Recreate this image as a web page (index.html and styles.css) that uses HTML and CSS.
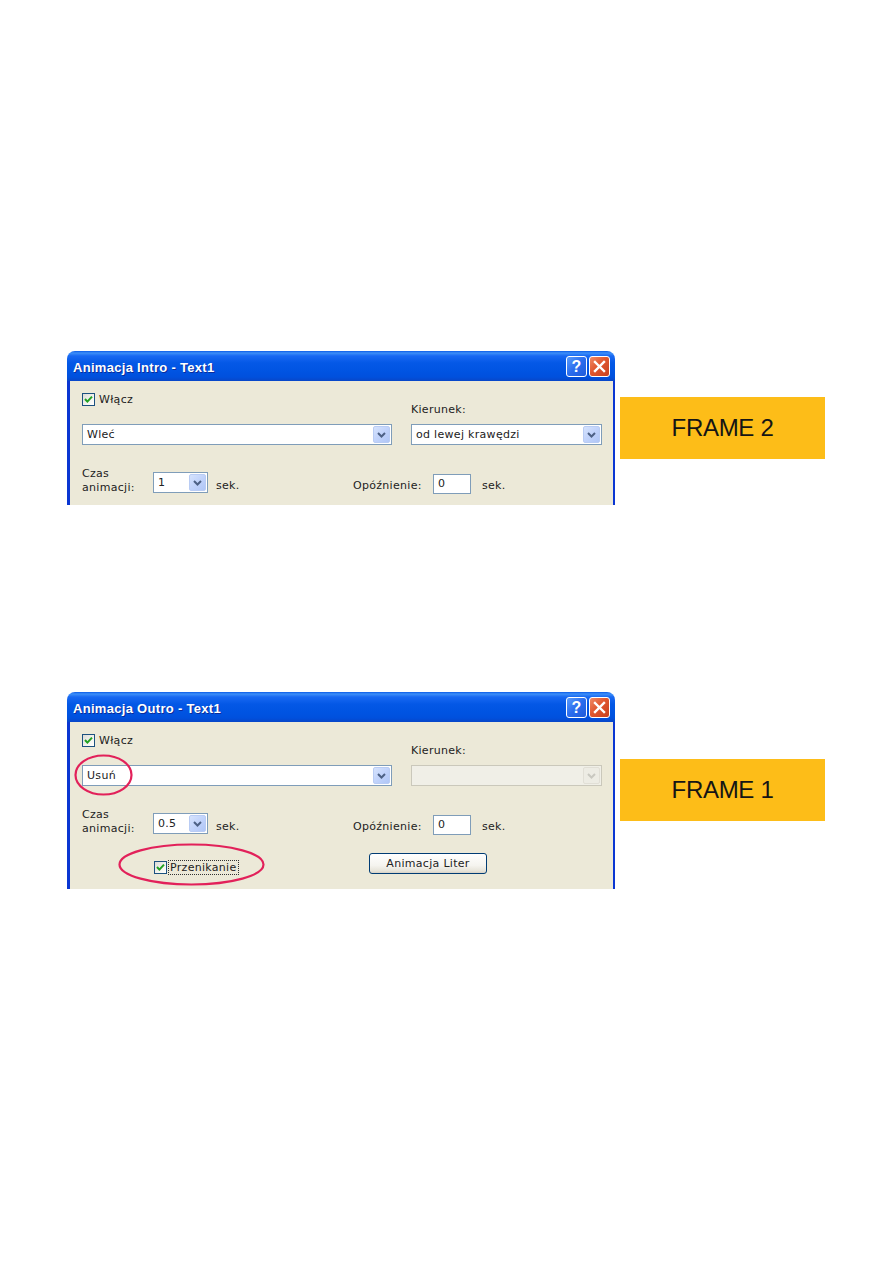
FILE: index.html
```html
<!DOCTYPE html>
<html lang="pl">
<head>
<meta charset="utf-8">
<title>Animacja</title>
<link rel="stylesheet" href="styles.css">
</head>
<body>
<main class="page">
  <section class="row">
    <div class="dialog">
      <div class="titlebar">
        <span class="title">Animacja Intro - Text1</span>
        <div class="tbtns">
          <span class="tbtn help">?</span>
          <span class="tbtn close"><svg width="13" height="13" viewBox="0 0 13 13"><path d="M2 2 L11 11 M11 2 L2 11" stroke="#fff" stroke-width="2.4" stroke-linecap="square"/></svg></span>
        </div>
      </div>
      <div class="dbody b1">
        <div class="r1">
          <div class="colL">
            <div class="chk"><span class="box"><svg width="11" height="11" viewBox="0 0 11 11"><path d="M2 5 L4.4 7.6 L9 2.6" fill="none" stroke="#21A121" stroke-width="2"/></svg></span><span>Włącz</span></div>
            <div class="combo wide"><span class="val">Wleć</span><span class="arrow"><svg width="9" height="6" viewBox="0 0 9 6"><path d="M1 1 L4.5 4.5 L8 1" fill="none" stroke="#4D6185" stroke-width="2"/></svg></span></div>
          </div>
          <div class="colR">
            <div class="lbl">Kierunek:</div>
            <div class="combo mid"><span class="val">od lewej krawędzi</span><span class="arrow"><svg width="9" height="6" viewBox="0 0 9 6"><path d="M1 1 L4.5 4.5 L8 1" fill="none" stroke="#4D6185" stroke-width="2"/></svg></span></div>
          </div>
        </div>
        <div class="r2">
          <div class="lbl2">Czas<br>animacji:</div>
          <div class="combo small"><span class="val">1</span><span class="arrow"><svg width="9" height="6" viewBox="0 0 9 6"><path d="M1 1 L4.5 4.5 L8 1" fill="none" stroke="#4D6185" stroke-width="2"/></svg></span></div>
          <span class="sek1">sek.</span>
          <span class="opo">Opóźnienie:</span>
          <div class="input">0</div>
          <span class="sek2">sek.</span>
        </div>
      </div>
    </div>
    <div class="frame f2">FRAME 2</div>
  </section>

  <section class="row">
    <div class="dialog">
      <div class="titlebar">
        <span class="title">Animacja Outro - Text1</span>
        <div class="tbtns">
          <span class="tbtn help">?</span>
          <span class="tbtn close"><svg width="13" height="13" viewBox="0 0 13 13"><path d="M2 2 L11 11 M11 2 L2 11" stroke="#fff" stroke-width="2.4" stroke-linecap="square"/></svg></span>
        </div>
      </div>
      <div class="dbody b2">
        <div class="r1">
          <div class="colL">
            <div class="chk"><span class="box"><svg width="11" height="11" viewBox="0 0 11 11"><path d="M2 5 L4.4 7.6 L9 2.6" fill="none" stroke="#21A121" stroke-width="2"/></svg></span><span>Włącz</span></div>
            <div class="combo wide"><span class="val">Usuń</span><span class="arrow"><svg width="9" height="6" viewBox="0 0 9 6"><path d="M1 1 L4.5 4.5 L8 1" fill="none" stroke="#4D6185" stroke-width="2"/></svg></span></div>
          </div>
          <div class="colR">
            <div class="lbl">Kierunek:</div>
            <div class="combo mid disabled"><span class="val"></span><span class="arrow"><svg width="9" height="6" viewBox="0 0 9 6"><path d="M1 1 L4.5 4.5 L8 1" fill="none" stroke="#C9C8C0" stroke-width="2"/></svg></span></div>
          </div>
        </div>
        <div class="r2">
          <div class="lbl2">Czas<br>animacji:</div>
          <div class="combo small"><span class="val">0.5</span><span class="arrow"><svg width="9" height="6" viewBox="0 0 9 6"><path d="M1 1 L4.5 4.5 L8 1" fill="none" stroke="#4D6185" stroke-width="2"/></svg></span></div>
          <span class="sek1">sek.</span>
          <span class="opo">Opóźnienie:</span>
          <div class="input">0</div>
          <span class="sek2">sek.</span>
        </div>
        <div class="r3">
          <div class="chk chk2"><span class="box"><svg width="11" height="11" viewBox="0 0 11 11"><path d="M2 5 L4.4 7.6 L9 2.6" fill="none" stroke="#21A121" stroke-width="2"/></svg></span><span class="focus">Przenikanie</span></div>
          <span class="btn">Animacja Liter</span>
        </div>
      </div>
      <svg class="marks" width="548" height="197" viewBox="0 0 548 197">
        <ellipse cx="36.5" cy="83" rx="28" ry="19.5" fill="none" stroke="#E2215A" stroke-width="2.2"/>
        <ellipse cx="124.5" cy="172.5" rx="72" ry="20" fill="none" stroke="#E2215A" stroke-width="2.2"/>
      </svg>
    </div>
    <div class="frame f1">FRAME 1</div>
  </section>
</main>
</body>
</html>
```

FILE: styles.css
```css
* { box-sizing: border-box; }

body {
  margin: 0;
  background: #fff;
  font-family: "DejaVu Sans", Verdana, sans-serif;
}

.page {
  padding: 351px 0 0 67px;
  display: flex;
  flex-direction: column;
  gap: 187px;
}

.row {
  display: flex;
  align-items: flex-start;
}

.dialog {
  width: 548px;
  flex-shrink: 0;
  position: relative;
}

.titlebar {
  height: 30px;
  border-radius: 8px 8px 0 0;
  background: linear-gradient(to bottom, #0A5BE8 0px, #3D8FF8 2px, #1868F2 5px, #0458E6 12px, #0054E2 20px, #0050DD 26px, #0846C8 30px);
  display: flex;
  align-items: center;
  justify-content: space-between;
  padding: 0 5px 0 6px;
}

.title {
  color: #fff;
  font-family: "Liberation Sans", Arial, sans-serif;
  font-weight: bold;
  font-size: 13px;
  letter-spacing: 0.3px;
  margin-top: 2px;
  text-shadow: 1px 1px 0 #0B2C9A;
}

.tbtns {
  display: flex;
  gap: 2px;
  margin-top: 1px;
}

.tbtn {
  width: 21px;
  height: 21px;
  border: 1px solid #fff;
  border-radius: 3px;
  display: flex;
  align-items: center;
  justify-content: center;
}

.help {
  background: linear-gradient(135deg, #5A9CFB 0%, #2A6CEE 50%, #1F5BD9 100%);
  color: #fff;
  font-family: "Liberation Sans", Arial, sans-serif;
  font-weight: bold;
  font-size: 16px;
  line-height: 1;
}

.close {
  background: linear-gradient(135deg, #F08A66 0%, #E0572F 45%, #C8401F 100%);
}

.dbody {
  background: #ECE9D8;
  border-left: 3px solid #0A36D2;
  border-right: 2px solid #0A36D2;
  padding: 12px 0 0 12px;
  font-size: 11px;
  color: #222;
  letter-spacing: 0.3px;
  overflow: hidden;
}

.b1 { height: 124px; }
.b2 { height: 167px; }

.r1 {
  display: flex;
  align-items: flex-start;
}

.colL {
  width: 310px;
  display: flex;
  flex-direction: column;
  gap: 18px;
}

.colR {
  width: 191px;
  margin-left: 19px;
  padding-top: 10px;
  display: flex;
  flex-direction: column;
  gap: 8px;
}

.chk {
  display: flex;
  align-items: center;
  height: 13px;
  line-height: 13px;
}

.box {
  width: 13px;
  height: 13px;
  flex-shrink: 0;
  border: 1px solid #1C5180;
  background: linear-gradient(135deg, #DCDCD7 0%, #F4F4F0 60%, #fff 100%);
  display: flex;
  align-items: center;
  justify-content: center;
  margin-right: 4px;
}

.lbl {
  height: 13px;
  line-height: 13px;
}

.combo {
  height: 21px;
  border: 1px solid #7F9DB9;
  background: #fff;
  display: flex;
  align-items: center;
  padding: 1px;
}

.combo .val {
  flex: 1;
  padding-left: 3px;
  line-height: 17px;
  white-space: nowrap;
}

.combo .arrow {
  width: 17px;
  height: 17px;
  flex-shrink: 0;
  border: 1px solid #B9CCF4;
  border-radius: 2px;
  background: linear-gradient(135deg, #D6E3FD 0%, #C1D3FB 50%, #B0C6F6 100%);
  display: flex;
  align-items: center;
  justify-content: center;
}

.combo.wide { width: 310px; }
.combo.mid { width: 191px; }
.combo.small { width: 55px; }

.combo.disabled {
  background: #F0EFE7;
  border-color: #CAC8BB;
}

.combo.disabled .arrow {
  background: #EDECE4;
  border-color: #E1DFD6;
}

.r2 {
  display: flex;
  align-items: flex-start;
  margin-top: 22px;
}

.lbl2 {
  width: 71px;
  flex-shrink: 0;
  line-height: 14px;
}

.r2 .combo.small {
  margin-top: 5px;
}

.sek1 {
  width: 137px;
  margin-left: 8px;
  margin-top: 12px;
  line-height: 13px;
}

.opo {
  width: 80px;
  margin-top: 12px;
  line-height: 13px;
}

.input {
  width: 38px;
  height: 20px;
  margin-top: 7px;
  border: 1px solid #7F9DB9;
  background: #fff;
  padding-left: 4px;
  line-height: 18px;
}

.sek2 {
  margin-left: 11px;
  margin-top: 12px;
  line-height: 13px;
}

.r3 {
  display: flex;
  align-items: flex-start;
  margin-top: 17px;
}

.chk2 {
  margin-left: 72px;
  margin-top: 8px;
  width: 215px;
}

.chk2 .box { margin-right: 1px; }

.focus {
  border: 1px dotted #333;
  padding: 0 1px;
  line-height: 13px;
}

.btn {
  width: 118px;
  height: 21px;
  border: 1px solid #003C74;
  border-radius: 3px;
  background: linear-gradient(to bottom, #FFFFFF 0%, #F5F4EF 60%, #E6E3D8 90%, #D6D0C5 100%);
  display: flex;
  align-items: center;
  justify-content: center;
  line-height: 13px;
}

.marks {
  position: absolute;
  left: 0;
  top: 0;
  pointer-events: none;
}

.frame {
  width: 205px;
  height: 62px;
  margin-left: 5px;
  background: #FDBD18;
  display: flex;
  align-items: center;
  justify-content: center;
  font-family: "Liberation Sans", Arial, sans-serif;
  font-size: 24px;
  color: #151515;
  letter-spacing: -0.3px;
}

.f2 { margin-top: 46px; }
.f1 { margin-top: 67px; }
```
